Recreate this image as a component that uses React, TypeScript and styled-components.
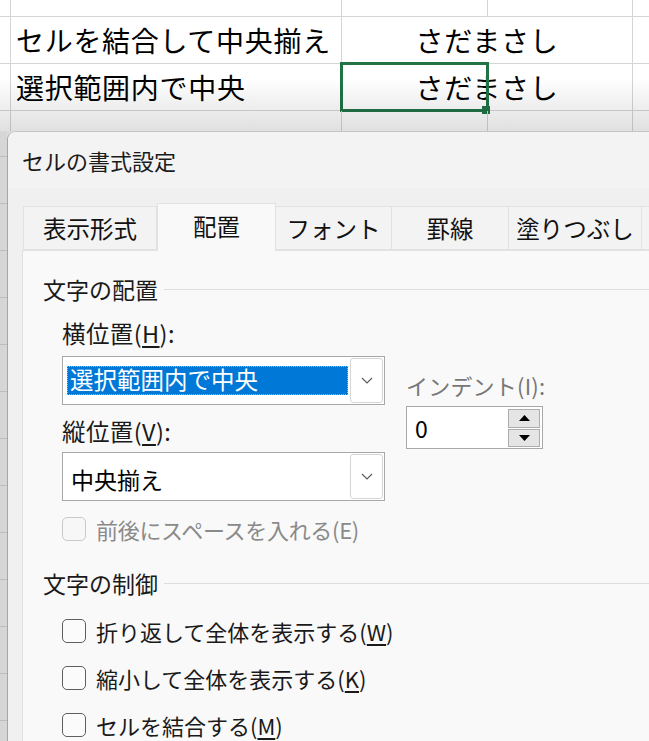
import React from 'react';
import styled, { createGlobalStyle } from 'styled-components';

const GlobalStyle = createGlobalStyle`
  html, body { margin: 0; padding: 0; width: 649px; height: 741px; overflow: hidden; background: #ffffff; }
  body { font-family: "Noto Sans CJK JP", "Noto Sans", sans-serif; color: #1a1a1a; }
  #root { width: 649px; height: 741px; overflow: hidden; }
`;

const Page = styled.div`
  display: flex;
  flex-direction: column;
  width: 649px;
  height: 741px;
`;

/* ---------- spreadsheet ---------- */
const Sheet = styled.div`
  position: relative;
  flex: none;
  height: 131px;
  overflow: hidden;
  background: #ffffff;
  &::after {
    content: '';
    position: absolute;
    left: 0;
    right: 0;
    top: 78px;
    bottom: 0;
    background: linear-gradient(to bottom, rgba(0, 0, 0, 0), rgba(0, 0, 0, 0.12));
    pointer-events: none;
  }
`;

const SheetRow = styled.div<{ $h: number; $last?: boolean }>`
  position: relative;
  display: grid;
  grid-template-columns: 11px 331px 146px 145px 1fr;
  height: ${(p) => p.$h}px;
  box-sizing: border-box;
  border-bottom: ${(p) => (p.$last ? 'none' : '1px solid #d5d5d5')};
`;

const Cell = styled.div<{ $span?: number; $center?: boolean; $noLine?: boolean }>`
  grid-column: span ${(p) => p.$span ?? 1};
  box-sizing: border-box;
  border-right: ${(p) => (p.$noLine ? 'none' : '1px solid #d5d5d5')};
  display: flex;
  align-items: center;
  justify-content: ${(p) => (p.$center ? 'center' : 'flex-start')};
  padding-left: ${(p) => (p.$center ? '0' : '5px')};
  font-size: 28px;
  letter-spacing: 0.7px;
  color: #000;
  white-space: nowrap;
  overflow: hidden;
`;

const Selection = styled.div`
  position: absolute;
  left: 340px;
  top: -2px;
  width: 149px;
  height: 50px;
  box-sizing: border-box;
  border: 3px solid #217346;
`;

const Handle = styled.div`
  position: absolute;
  right: -4px;
  bottom: -5px;
  width: 8px;
  height: 8px;
  background: #217346;
`;

/* ---------- lower area ---------- */
const Lower = styled.div`
  display: flex;
  flex: 1;
  min-height: 0;
  background: #dcdcdc;
`;

const SheetEdge = styled.div`
  flex: none;
  width: 7px;
  background-color: #d6d6d6;
  background-image: repeating-linear-gradient(
    to bottom,
    transparent 0px,
    transparent 25px,
    #bdbdbd 25px,
    #bdbdbd 26px,
    transparent 26px,
    transparent 47px
  );
`;

const Dialog = styled.div`
  flex: none;
  width: 720px;
  display: flex;
  flex-direction: column;
  background: #f0f0f0;
  border-left: 1px solid #a6a6a6;
  border-top: 1px solid #c4c4c4;
  border-top-left-radius: 9px;
  overflow: hidden;
`;

const TitleBar = styled.div`
  height: 56px;
  display: flex;
  align-items: center;
  padding-left: 14px;
  background: #f3f3f3;
  font-size: 22px;
  color: #1b1b1b;
`;

const Body = styled.div`
  flex: 1;
  padding: 15px 0 0 14px;
  display: flex;
  flex-direction: column;
`;

const Tabs = styled.div`
  display: flex;
  align-items: flex-end;
  height: 47px;
  padding-left: 1px;
  position: relative;
  z-index: 1;
`;

const Tab = styled.div<{ $w: number; $active?: boolean }>`
  flex: none;
  width: ${(p) => p.$w}px;
  height: ${(p) => (p.$active ? 48 : 44)}px;
  box-sizing: border-box;
  margin-bottom: ${(p) => (p.$active ? -1 : 0)}px;
  border: 1px solid #e2e2e2;
  border-bottom: ${(p) => (p.$active ? 'none' : '1px solid #e2e2e2')};
  border-left: ${(p) => (p.$active ? '1px solid #e2e2e2' : 'none')};
  background: ${(p) => (p.$active ? '#f9f9f9' : '#f3f3f3')};
  display: flex;
  align-items: center;
  justify-content: center;
  padding-bottom: ${(p) => (p.$active ? 3 : 0)}px;
  font-size: 23.5px;
  color: #111;
  white-space: nowrap;
  &:first-child {
    border-left: 1px solid #e2e2e2;
  }
`;

const Panel = styled.div`
  flex: 1;
  background: #f9f9f9;
  border-top: 1px solid #e2e2e2;
  border-left: 1px solid #e0e0e0;
  padding: 23px 0 0 20px;
  display: flex;
  flex-direction: column;
`;

const Heading = styled.div<{ $mt?: number }>`
  display: flex;
  align-items: center;
  height: 30px;
  margin-top: ${(p) => p.$mt ?? 0}px;
  font-size: 23px;
  color: #1a1a1a;
  white-space: nowrap;
  &::after {
    content: '';
    flex: 1;
    height: 1px;
    margin-left: 6px;
    background: #dedede;
  }
`;

const AlignBlock = styled.div`
  display: flex;
  margin: 14px 0 0 19px;
`;

const LeftCol = styled.div`
  width: 323px;
  display: flex;
  flex-direction: column;
`;

const RightCol = styled.div`
  margin-left: 21px;
  padding-top: 52px;
  display: flex;
  flex-direction: column;
`;

const Label = styled.div<{ $mt?: number; $muted?: boolean }>`
  height: 30px;
  line-height: 30px;
  margin-top: ${(p) => p.$mt ?? 0}px;
  font-size: ${(p) => (p.$muted ? 22 : 23.5)}px;
  letter-spacing: ${(p) => (p.$muted ? 0.2 : 0.4)}px;
  color: ${(p) => (p.$muted ? '#777777' : '#1a1a1a')};
  white-space: nowrap;
  u {
    text-decoration-thickness: 1.5px;
    text-underline-offset: 3px;
  }
`;

const Select = styled.div<{ $mt?: number }>`
  margin-top: ${(p) => p.$mt ?? 0}px;
  width: 323px;
  height: 49px;
  box-sizing: border-box;
  border: 1px solid #a8a8a8;
  background: #ffffff;
  display: flex;
  padding: 1px;
`;

const SelectValue = styled.div`
  flex: 1;
  display: flex;
  align-items: center;
  padding: 0 2px 0 3px;
  font-size: 23.5px;
  color: #000;
`;

const PlainValue = styled.span`
  padding-left: 4px;
  padding-top: 4px;
  font-size: 23px;
`;

const Highlight = styled.span`
  flex: 1;
  height: 29px;
  box-sizing: border-box;
  background: #0078d7;
  color: #ffffff;
  line-height: 27px;
  padding-left: 3px;
  outline: 1px dotted #f2a65a;
  outline-offset: -1px;
  white-space: nowrap;
`;

const DropButton = styled.div`
  flex: none;
  width: 33px;
  box-sizing: border-box;
  border: 1px solid #d6d6d6;
  border-radius: 3px;
  background: #ffffff;
  display: flex;
  align-items: center;
  justify-content: center;
`;

const Spin = styled.div`
  margin-top: 6px;
  width: 137px;
  height: 43px;
  box-sizing: border-box;
  border: 1px solid #a8a8a8;
  background: #ffffff;
  display: flex;
  padding: 2px 2px 1px 0;
`;

const SpinValue = styled.div`
  flex: 1;
  display: flex;
  align-items: center;
  padding-left: 8px;
  font-size: 23px;
  color: #000;
`;

const SpinButtons = styled.div`
  flex: none;
  width: 32px;
  display: flex;
  flex-direction: column;
  gap: 1px;
`;

const SpinButton = styled.div`
  flex: 1;
  box-sizing: border-box;
  border: 1px solid #adadad;
  background: #e5e5e5;
  display: flex;
  align-items: center;
  justify-content: center;
`;

const CheckRow = styled.div<{ $mt?: number; $disabled?: boolean }>`
  display: flex;
  align-items: center;
  height: 24px;
  margin-top: ${(p) => p.$mt ?? 0}px;
  margin-left: 19px;
  font-size: 22px;
  letter-spacing: ${(p) => (p.$disabled ? -0.3 : 0)}px;
  color: ${(p) => (p.$disabled ? '#8a8a8a' : '#1a1a1a')};
  white-space: nowrap;
  u {
    text-decoration-thickness: 1.5px;
    text-underline-offset: 3px;
  }
`;

const Box = styled.span<{ $disabled?: boolean }>`
  flex: none;
  width: 24px;
  height: 24px;
  box-sizing: border-box;
  border: 1.5px solid ${(p) => (p.$disabled ? '#c9c9c9' : '#5e5e5e')};
  border-radius: 5px;
  background: ${(p) => (p.$disabled ? '#f7f7f7' : '#fbfbfb')};
  margin-right: 10px;
`;

const CheckList = styled.div`
  display: flex;
  flex-direction: column;
  gap: 23px;
  margin-top: 21px;
`;

const Chevron = () => (
  <svg width="12" height="7" viewBox="0 0 12 7">
    <path d="M1 1 L6 6 L11 1" fill="none" stroke="#5a5a5a" strokeWidth="1.1" />
  </svg>
);

const Tri = ({ up }: { up?: boolean }) => (
  <svg width="11" height="6" viewBox="0 0 11 6">
    <path d={up ? 'M0 6 L5.5 0 L11 6 Z' : 'M0 0 L5.5 6 L11 0 Z'} fill="#000" />
  </svg>
);

export default function App() {
  return (
    <>
      <GlobalStyle />
      <Page>
        <Sheet>
          <SheetRow $h={17}>
            <Cell />
            <Cell />
            <Cell />
            <Cell />
            <Cell $noLine />
          </SheetRow>
          <SheetRow $h={47}>
            <Cell />
            <Cell>セルを結合して中央揃え</Cell>
            <Cell $span={2} $center>さだまさし</Cell>
            <Cell $noLine />
          </SheetRow>
          <SheetRow $h={47}>
            <Cell />
            <Cell>選択範囲内で中央</Cell>
            <Cell $span={2} $center>さだまさし</Cell>
            <Cell $noLine />
            <Selection>
              <Handle />
            </Selection>
          </SheetRow>
          <SheetRow $h={20} $last>
            <Cell />
            <Cell />
            <Cell />
            <Cell />
            <Cell $noLine />
          </SheetRow>
        </Sheet>
        <Lower>
          <SheetEdge />
          <Dialog>
            <TitleBar>セルの書式設定</TitleBar>
            <Body>
              <Tabs>
                <Tab $w={134}>表示形式</Tab>
                <Tab $w={119} $active>配置</Tab>
                <Tab $w={116}>フォント</Tab>
                <Tab $w={117}>罫線</Tab>
                <Tab $w={133}>塗りつぶし</Tab>
                <Tab $w={80}></Tab>
              </Tabs>
              <Panel>
                <Heading>文字の配置</Heading>
                <AlignBlock>
                  <LeftCol>
                    <Label>
                      横位置(<u>H</u>):
                    </Label>
                    <Select $mt={8}>
                      <SelectValue>
                        <Highlight>選択範囲内で中央</Highlight>
                      </SelectValue>
                      <DropButton>
                        <Chevron />
                      </DropButton>
                    </Select>
                    <Label $mt={11}>
                      縦位置(<u>V</u>):
                    </Label>
                    <Select $mt={6}>
                      <SelectValue>
                        <PlainValue>中央揃え</PlainValue>
                      </SelectValue>
                      <DropButton>
                        <Chevron />
                      </DropButton>
                    </Select>
                  </LeftCol>
                  <RightCol>
                    <Label $muted>インデント(I):</Label>
                    <Spin>
                      <SpinValue>0</SpinValue>
                      <SpinButtons>
                        <SpinButton>
                          <Tri up />
                        </SpinButton>
                        <SpinButton>
                          <Tri />
                        </SpinButton>
                      </SpinButtons>
                    </Spin>
                  </RightCol>
                </AlignBlock>
                <CheckRow $mt={16} $disabled>
                  <Box $disabled />
                  前後にスペースを入れる(E)
                </CheckRow>
                <Heading $mt={27}>文字の制御</Heading>
                <CheckList>
                  <CheckRow>
                    <Box />
                    折り返して全体を表示する(<u>W</u>)
                  </CheckRow>
                  <CheckRow>
                    <Box />
                    縮小して全体を表示する(<u>K</u>)
                  </CheckRow>
                  <CheckRow>
                    <Box />
                    セルを結合する(<u>M</u>)
                  </CheckRow>
                </CheckList>
              </Panel>
            </Body>
          </Dialog>
        </Lower>
      </Page>
    </>
  );
}
